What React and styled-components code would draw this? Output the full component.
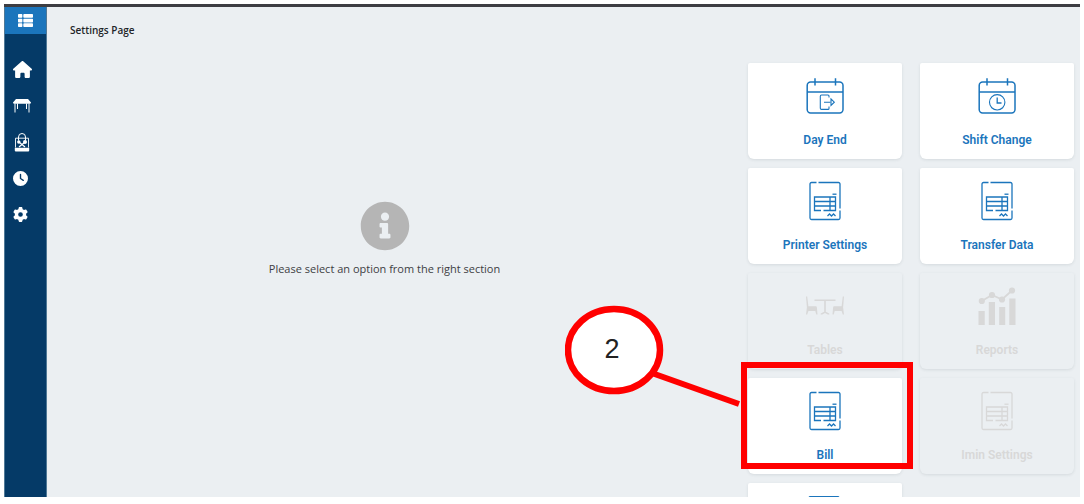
import React from "react";
import styled, { createGlobalStyle } from "styled-components";
import { FaInfoCircle, FaThList } from "react-icons/fa";
import { FaClock, FaGear, FaHouse } from "react-icons/fa6";

const GlobalStyle = createGlobalStyle`
  * {
    box-sizing: border-box;
  }

  body {
    margin: 0;
    background: #ffffff;
    font-family: "Open Sans", "Noto Sans", sans-serif;
  }
`;

const Page = styled.div`
  height: 100vh;
  padding: 4px 4px 7px;
`;

const Frame = styled.div`
  display: flex;
  height: 100%;
  overflow: hidden;
  background: #ebeff2;
  border-top: 3px solid #3d3d42;
`;

const Sidebar = styled.nav`
  display: flex;
  flex-direction: column;
  flex: 0 0 43px;
  background: #053a67;
  border-left: 1px solid #4f7896;
  border-right: 1px solid #4f7896;
`;

const MenuButton = styled.button`
  display: flex;
  align-items: center;
  justify-content: center;
  height: 27px;
  margin: 0 0 16px;
  padding: 0;
  border: none;
  background: #1b75bc;
  color: #ffffff;
  cursor: pointer;
`;

const NavItem = styled.a`
  display: flex;
  align-items: center;
  height: ${({ $tall }) => ($tall ? "38px" : "36px")};
  padding-left: 8px;
  color: #ffffff;
`;

const Main = styled.main`
  display: flex;
  flex: 1;
  min-width: 0;
`;

const Content = styled.section`
  flex: 1;
  min-width: 0;
`;

const Title = styled.h1`
  margin: 0;
  padding: 15px 23px;
  font-size: 10px;
  font-weight: 600;
  line-height: 16px;
  color: #222529;
`;

const Empty = styled.div`
  display: flex;
  flex-direction: column;
  align-items: center;
  gap: 9px;
  padding-top: 148px;
  color: #b5b5b5;
`;

const Message = styled.p`
  margin: 0;
  font-size: 11px;
  line-height: 18px;
  color: #3d4043;
`;

const Options = styled.aside`
  display: grid;
  grid-template-columns: repeat(2, minmax(0, 1fr));
  align-content: start;
  gap: 9px 18px;
  flex: 0 0 358px;
  padding: 56px 6px 0 26px;
`;

const Cell = styled.div`
  position: relative;
`;

const Card = styled.button`
  display: flex;
  flex-direction: column;
  align-items: center;
  gap: 16px;
  width: 100%;
  height: 96px;
  padding: 13px 8px 11px;
  border: none;
  border-radius: 2px 2px 6px 6px;
  background: #ffffff;
  box-shadow: 0 1px 3px rgba(60, 70, 80, 0.12);
  color: #1b75bc;
  cursor: pointer;

  &:disabled {
    background: #ebeff2;
    color: #d8d8d8;
    cursor: default;
  }
`;

const Label = styled.span`
  font-family: Roboto, "Liberation Sans", sans-serif;
  font-size: 12px;
  font-weight: 600;
  line-height: 16px;
`;

const Highlight = styled.div`
  position: absolute;
  inset: -16px -11px 5px -7px;
  z-index: 1;
  border: 6px solid #ff0000;
  pointer-events: none;
`;

const Callout = styled.div`
  position: absolute;
  top: -73px;
  left: -183px;
  z-index: 1;
  width: 176px;
  height: 102px;
  pointer-events: none;

  svg {
    display: block;
  }
`;

const CalloutNumber = styled.span`
  position: absolute;
  top: 28px;
  left: 0;
  width: 94px;
  font-family: "Liberation Sans", Arial, sans-serif;
  font-size: 27px;
  line-height: 32px;
  text-align: center;
  color: #222222;
`;

const TableIcon = () => (
  <svg width="18" height="14" viewBox="0 0 18 14" fill="currentColor">
    <path d="M3 0h12l3 3.6c0 .7-.4 1.2-1 1.2H1c-.6 0-1-.5-1-1.2z" />
    <path
      d="M2 4.5v9M4.5 4.5V10M13.5 4.5V10M16 4.5v9"
      fill="none"
      stroke="currentColor"
      strokeWidth="1"
    />
  </svg>
);

const BagIcon = () => (
  <svg width="18" height="19" viewBox="0 0 18 19" fill="none" stroke="currentColor">
    <path d="M5.5 7.500V4a3.500 3.500 0 0 1 7 0v3.500" />
    <path d="M2.500 14.500V5.200h13v9.300" strokeWidth="0.900" />
    <path d="M6 9l6 5M12 9l-6 5" strokeWidth="1.200" />
    <circle cx="5.800" cy="9" r="1.700" fill="currentColor" stroke="none" />
    <circle cx="12" cy="9" r="2" fill="currentColor" stroke="none" />
    <path
      d="M1.800 14.800h14.400v2.700a1 1 0 0 1-1 1H2.800a1 1 0 0 1-1-1z"
      fill="currentColor"
      stroke="none"
    />
  </svg>
);

const CalendarIcon = ({ children }) => (
  <svg
    width="40"
    height="40"
    viewBox="0 0 40 40"
    fill="none"
    stroke="currentColor"
    strokeWidth="1.5"
  >
    <rect x="2.200" y="6" width="35.800" height="31" rx="3.400" />
    <path d="M2 16h36M10 2.200v7.400M30.500 2.200v7.400" />
    {children}
  </svg>
);

const DayEndIcon = () => (
  <CalendarIcon>
    <path
      d="M24 21.500V20a1 1 0 0 0-1-1h-6.500a1.200 1.200 0 0 0-1.200 1.200v12a1.200 1.200 0 0 0 1.200 1.200H23a1 1 0 0 0 1-1v-2M19 26.200h6.500"
      strokeWidth="1.100"
    />
    <path d="M26 23l3.300 3.200L26 29.400z" strokeWidth="1.100" />
  </CalendarIcon>
);

const ShiftIcon = () => (
  <CalendarIcon>
    <circle cx="20.200" cy="26.300" r="7.700" strokeWidth="1.100" />
    <path d="M20.200 21.500v5.500h4.300" strokeWidth="1.300" />
  </CalendarIcon>
);

const DocumentIcon = () => (
  <svg
    width="40"
    height="40"
    viewBox="0 0 40 40"
    fill="none"
    stroke="currentColor"
    strokeWidth="1.3"
  >
    <path d="M11.500 1.500H6.500A1.500 1.500 0 0 0 5 3v34a1.500 1.500 0 0 0 1.500 1.500h27A1.500 1.500 0 0 0 35 37v-7.500M35 27.500V3a1.500 1.500 0 0 0-1.500-1.500h-20" />
    <path d="M16 29.500H9.500V16h21v13.500H18.500M9.500 20.500h21M9.500 25h21M25 16v13.500" />
    <path d="M27.500 13.200h4" />
    <path d="M22.500 35l2-2 2 2 2-2 2 2" />
  </svg>
);

const DiningIcon = () => (
  <svg width="40" height="40" viewBox="0 0 40 40" fill="currentColor">
    <path
      d="M1 10.500h1.200l1.200 9.700h7.200c.8 0 1.200.5 1.300 1.200l.6 7h-1.200l-1-3.500H3.400l-1.200 3.500H1l.9-7z"
    />
    <path
      d="M39 10.500h-1.200l-1.200 9.700h-7.200c-.8 0-1.200.5-1.300 1.200l-.6 7h1.200l1-3.500h6.900l1.200 3.500H39l-.9-7z"
    />
    <path d="M9.500 13.500h21v1.400h-9.700v10.900l3.500 1.800v.8h-1.500L20 27l-2.800 1.400h-1.500v-.8l3.500-1.800V14.900H9.500z" />
  </svg>
);

const ReportsIcon = () => (
  <svg width="40" height="40" viewBox="0 0 40 40" fill="currentColor">
    <path d="M1.500 25h6.200v14H1.500zM11.800 16H18v23h-6.200zM22.200 21h6v18h-6zM32.300 12.500h6.200V39h-6.200z" />
    <circle cx="4.800" cy="15" r="3.100" />
    <circle cx="15" cy="9" r="3.100" />
    <circle cx="25" cy="13.500" r="3.100" />
    <circle cx="35" cy="4.500" r="3.100" />
    <path
      d="M4.800 15L15 9l10 4.500 10-9"
      fill="none"
      stroke="currentColor"
      strokeWidth="1.800"
    />
  </svg>
);

const ScreenIcon = () => (
  <svg width="40" height="40" viewBox="0 0 40 40" fill="none" stroke="currentColor">
    <path d="M3.500 8V2A1.500 1.500 0 0 1 5 .5h28A1.500 1.500 0 0 1 34.500 2v6" />
  </svg>
);

const options = [
  { id: "day-end", label: "Day End", icon: <DayEndIcon /> },
  { id: "shift", label: "Shift Change", icon: <ShiftIcon /> },
  { id: "printer", label: "Printer Settings", icon: <DocumentIcon /> },
  { id: "transfer", label: "Transfer Data", icon: <DocumentIcon /> },
  { id: "tables", label: "Tables", icon: <DiningIcon />, disabled: true },
  { id: "reports", label: "Reports", icon: <ReportsIcon />, disabled: true },
  { id: "bill", label: "Bill", icon: <DocumentIcon />, step: 2 },
  { id: "imin", label: "Imin Settings", icon: <DocumentIcon />, disabled: true },
  { id: "screen", icon: <ScreenIcon /> },
];

const StepMarker = ({ step }) => (
  <>
    <Highlight />
    <Callout>
      <svg width="176" height="102" viewBox="0 0 176 102">
        <path d="M84 67l90 32" stroke="#ff0000" strokeWidth="6" />
        <ellipse
          cx="49"
          cy="45"
          rx="46"
          ry="41"
          fill="#ffffff"
          stroke="#ff0000"
          strokeWidth="6.500"
        />
      </svg>
      <CalloutNumber>{step}</CalloutNumber>
    </Callout>
  </>
);

const App = () => {
  return (
    <Page>
      <GlobalStyle />
      <Frame>
        <Sidebar>
          <MenuButton type="button">
            <FaThList size={15} />
          </MenuButton>
          <NavItem href="#home" $tall>
            <FaHouse size={19} />
          </NavItem>
          <NavItem href="#tables">
            <TableIcon />
          </NavItem>
          <NavItem href="#orders">
            <BagIcon />
          </NavItem>
          <NavItem href="#history">
            <FaClock size={15} />
          </NavItem>
          <NavItem href="#settings">
            <FaGear size={15} />
          </NavItem>
        </Sidebar>
        <Main>
          <Content>
            <Title>Settings Page</Title>
            <Empty>
              <FaInfoCircle size={50} />
              <Message>Please select an option from the right section</Message>
            </Empty>
          </Content>
          <Options>
            {options.map(({ id, label, icon, disabled, step }) => (
              <Cell key={id}>
                <Card type="button" disabled={disabled}>
                  {icon}
                  {label && <Label>{label}</Label>}
                </Card>
                {step && <StepMarker step={step} />}
              </Cell>
            ))}
          </Options>
        </Main>
      </Frame>
    </Page>
  );
};

export default App;
